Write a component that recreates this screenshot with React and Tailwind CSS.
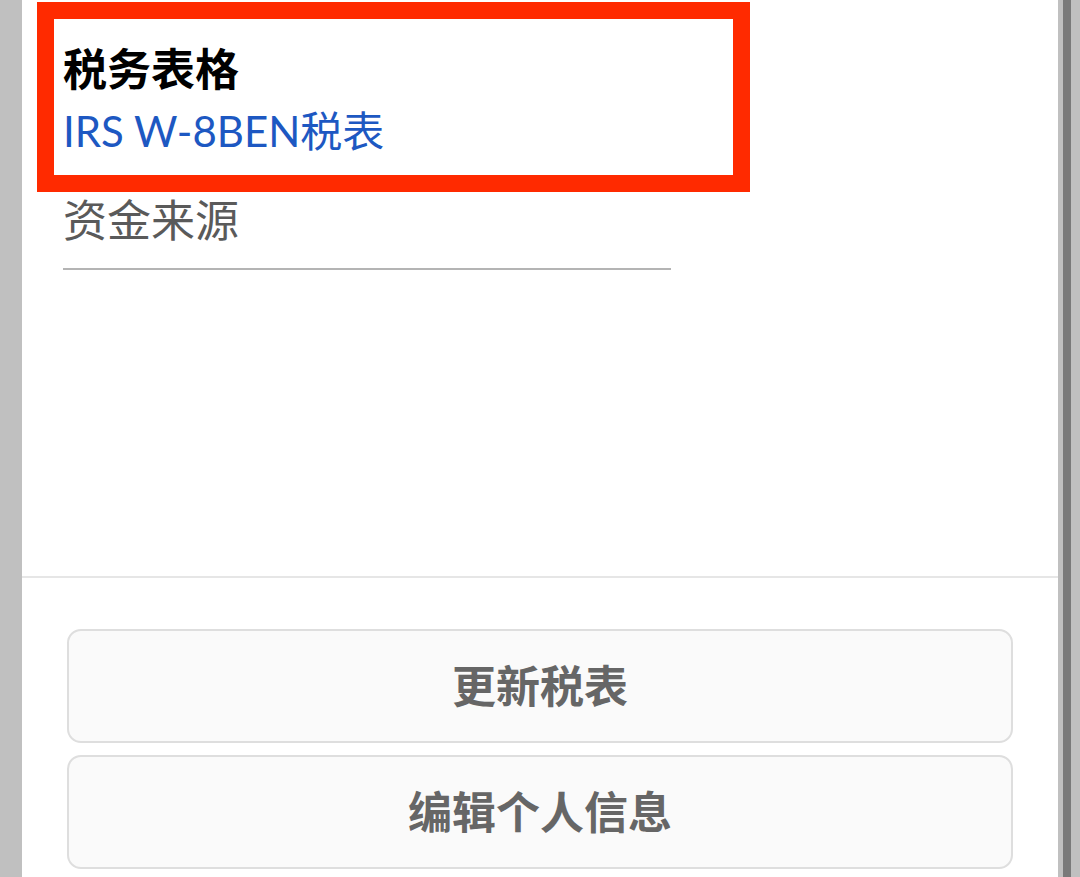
const CJK = { fontFamily: 'Lato, "Noto Sans CJK SC", sans-serif' };

function Field({ label, value, muted }) {
    return (
        <div className="flex flex-col">
            {label && <div className="text-[44px] leading-[62px] font-bold text-black">{label}</div>}
            {value && (
                <div className={muted ? "text-[44px] leading-[62px] text-[#5a5a5a]" : "text-[42px] leading-[62px] text-[#1d58c2]"}>
                    {value}
                </div>
            )}
        </div>
    );
}

function ActionButton({ children }) {
    return (
        <button className="h-[114px] w-[946px] rounded-[14px] border-2 border-[#dedede] bg-[#fafafa] text-[44px] font-bold text-[#666666]">
            {children}
        </button>
    );
}

export default function App() {
    return (
        <div className="flex h-[877px] w-[1080px] overflow-hidden bg-[#c0c0c0]" style={CJK}>
            <div className="w-[22px] shrink-0 bg-[#c0c0c0]" />

            <div className="flex flex-1 flex-col bg-white">
                <div className="relative h-[576px] pl-[41px] pt-[38px]">
                    <Field label="税务表格" value="IRS W-8BEN税表" />
                    <div className="mt-[27px]">
                        <Field value="资金来源" muted />
                    </div>
                    <div className="mt-[17px] h-[2px] w-[608px] bg-[#b4b4b4]" />

                    {/* annotation box */}
                    <div className="absolute left-[15px] top-[2px] h-[190px] w-[713px] border-[17px] border-[#ff2a00]" />
                </div>

                <div className="h-[2px] bg-[#e6e6e6]" />

                <div className="flex flex-col gap-[12px] pl-[45px] pt-[51px]">
                    <ActionButton>更新税表</ActionButton>
                    <ActionButton>编辑个人信息</ActionButton>
                </div>
            </div>

            <div className="flex w-[22px] shrink-0">
                <div className="w-[5px] bg-[#c0c0c0]" />
                <div className="w-[8px] bg-[#7a7a7a]" />
                <div className="flex-1 bg-[#c0c0c0]" />
            </div>
        </div>
    );
}
